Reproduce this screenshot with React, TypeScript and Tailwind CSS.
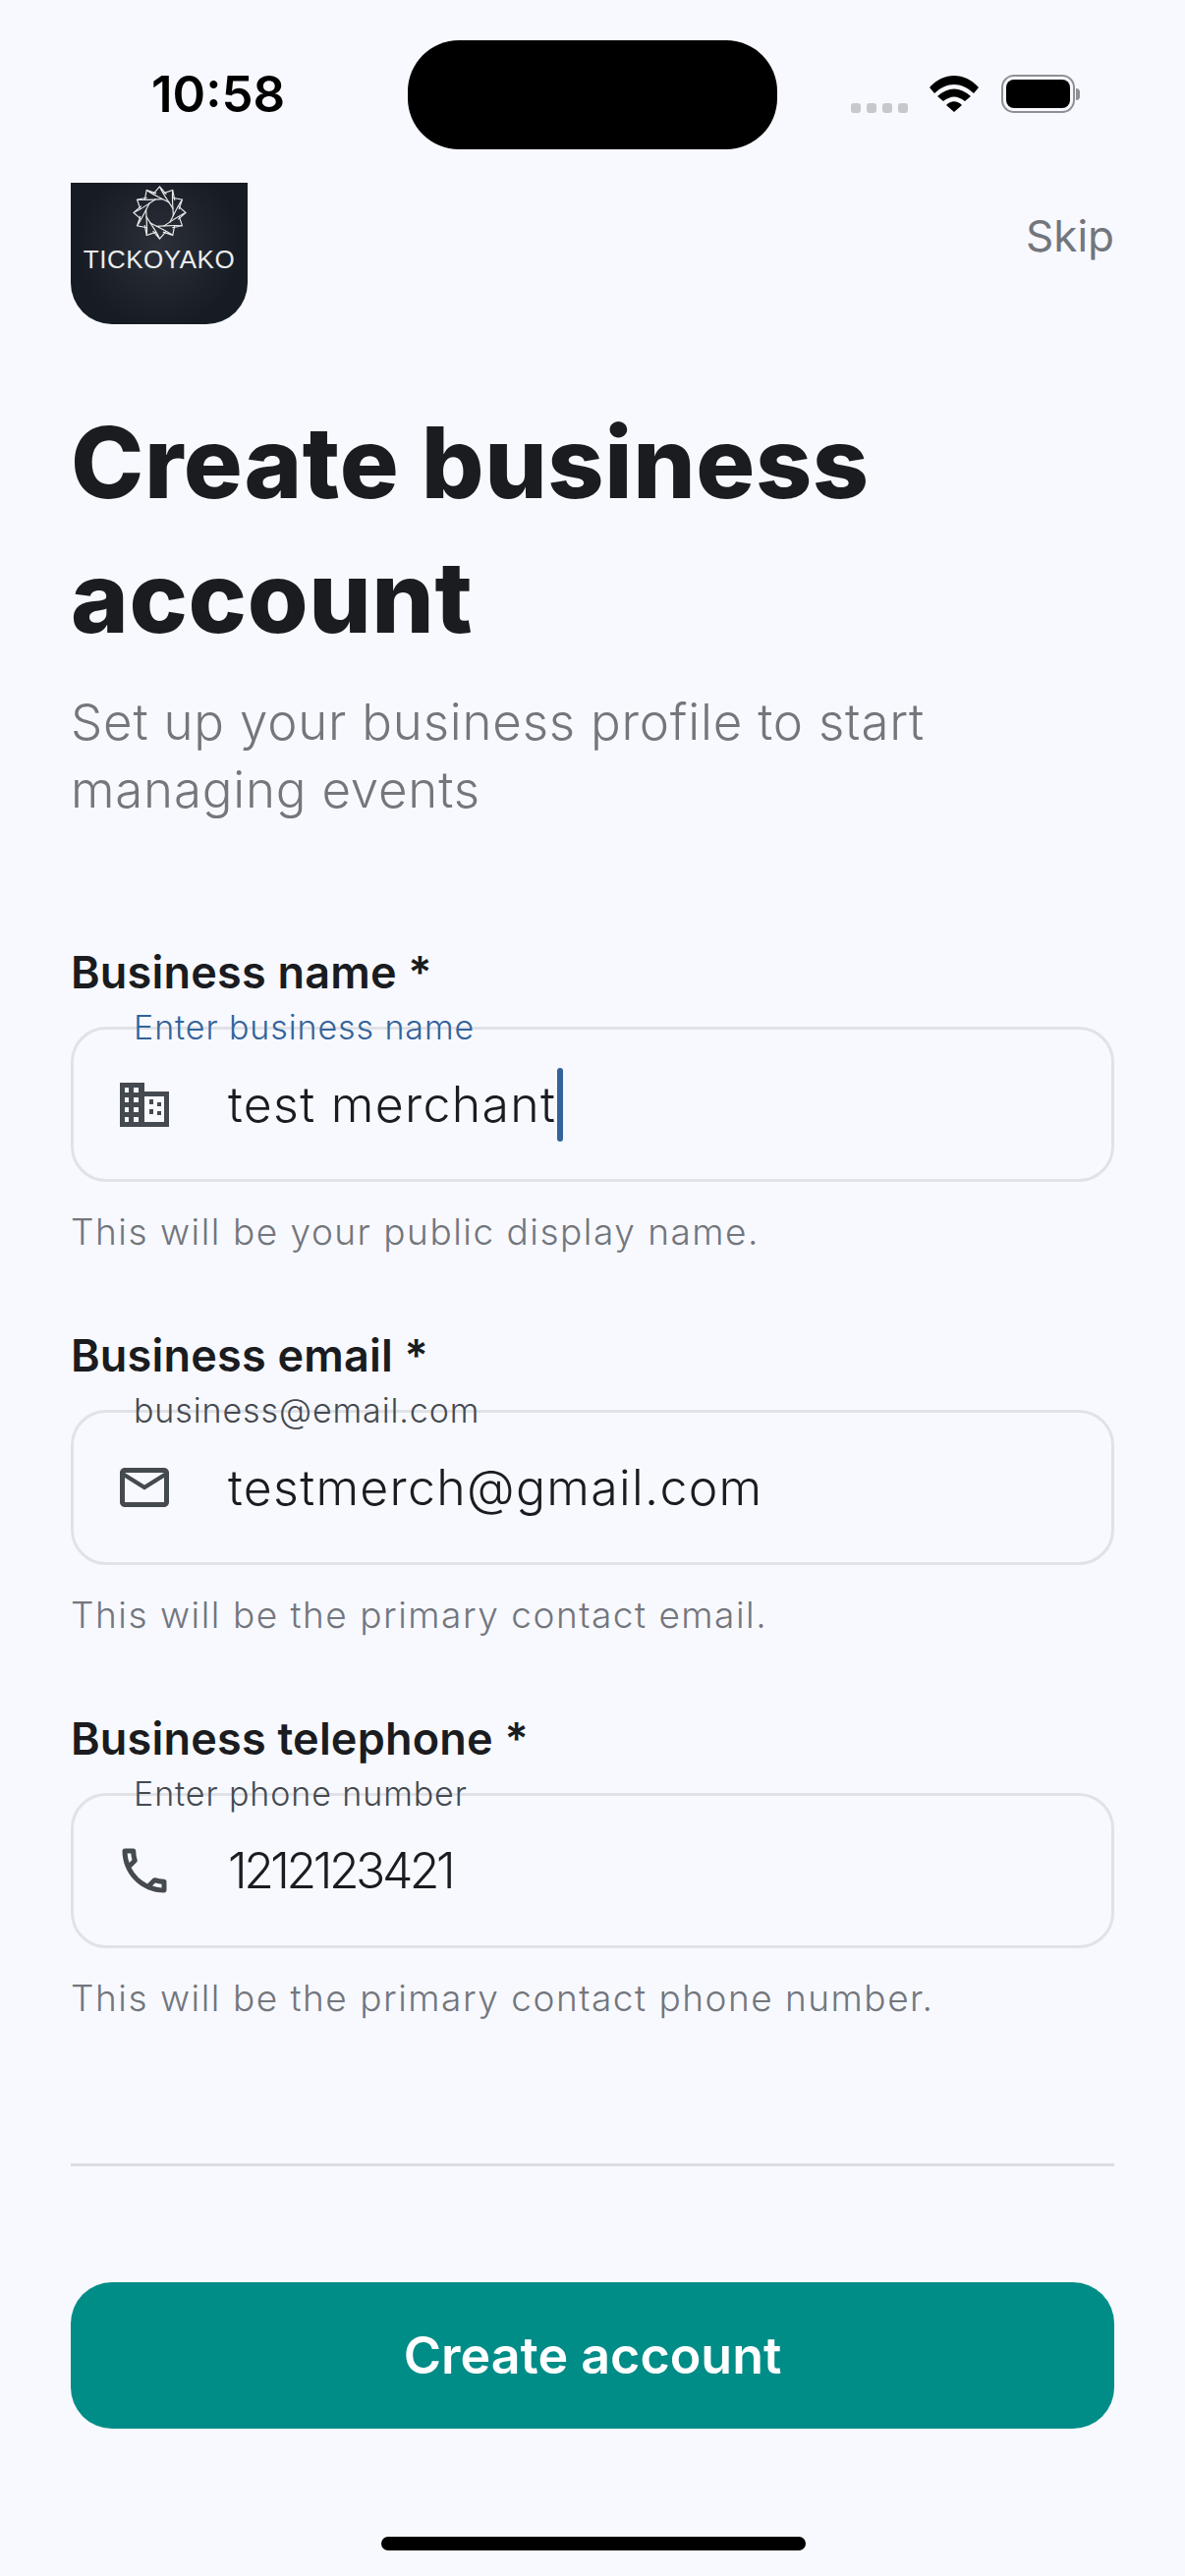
import React from "react";
import { MdOutlineEmail, MdOutlinePhone } from "react-icons/md";

const font = "[font-family:Inter,'Noto_Sans',sans-serif]";

function BuildingIcon() {
  return (
    <svg viewBox="0 0 50 45" className="w-[50px] h-[45px]" fill="#454a50" fillRule="evenodd">
      <path d="M0 0H25V9H50V45H0ZM5 5V10H9V5ZM14 5V10H19V5ZM5 15V20H9V15ZM14 15V20H19V15ZM5 25V30H9V25ZM14 25V30H19V25ZM5 35V40H9V35ZM14 35V40H19V35ZM25 14V40H45V14ZM30 17V22H34V17ZM38 20V24H42V20ZM30 27V32H34V27ZM38 29V33H42V29Z" />
    </svg>
  );
}

function Logo() {
  const petals = Array.from({ length: 12 }, (_, i) => i * 30);
  return (
    <div className="w-[180px] h-[144px] rounded-b-[42px] bg-[radial-gradient(circle_at_50%_45%,#2b3038,#171c24_70%)] overflow-hidden relative">
      <svg viewBox="-28 -28 56 56" className="absolute left-[63px] top-[3px] w-[55px] h-[55px]" fill="none" stroke="#e8e9ea" strokeWidth="1.2">
        {petals.map((a) => (
          <g key={a} transform={`rotate(${a})`}>
            <path d="M-7 -19 L0 -27 L7 -19 M0 -27 C3 -20 7 -15 14 -4" />
          </g>
        ))}
      </svg>
      <div className="absolute left-0 right-0 top-[66px] text-center text-[#eceded] text-[26px] leading-[24px] [font-family:'Liberation_Sans',sans-serif] tracking-[0.5px]">TICKOYAKO</div>
    </div>
  );
}

function Field({ label, placeholder, value, help, icon, focused, valueClass }: { label: string; placeholder: string; value: string; help: string; icon: React.ReactNode; focused?: boolean; valueClass: string }) {
  return (
    <div className="flex flex-col">
      <div className="text-[#1a1c20] text-[45px] leading-[60px] font-semibold tracking-[0.2px]">{label}</div>
      <div className="relative mt-[25px] h-[158px] rounded-[36px] border-[3px] border-[#e0e2e7] flex items-center pl-[47px]">
        <span className={`absolute left-[61px] top-[-24px] text-[34px] leading-[44px] tracking-[0.9px] font-light ${focused ? "text-[#33639a]" : "text-[#454a50]"}`}>{placeholder}</span>
        <span className="w-[50px] flex justify-center shrink-0">{icon}</span>
        <span className={`ml-[60px] text-[#1a1c20] text-[50px] leading-[70px] font-[350] flex items-center ${valueClass}`}>
          {value}
          {focused && <span className="inline-block w-[6px] h-[75px] rounded-full bg-[#33639a] ml-[1px]" />}
        </span>
      </div>
      <div className="mt-[26px] text-[#73767c] text-[37px] leading-[50px] font-light tracking-[1.5px]">{help}</div>
    </div>
  );
}

export default function App() {
  return (
    <div className={`w-[1206px] h-[2622px] bg-[#f8f9ff] relative overflow-hidden flex flex-col ${font}`}>
      <div className="absolute left-[415px] top-[41px] w-[376px] h-[111px] rounded-[52px] bg-black" />
      <div className="h-[186px] shrink-0 flex items-start justify-between pl-[154px] pr-[107px] pt-[66px]">
        <div className="text-black text-[51px] leading-[60px] font-semibold">10:58</div>
        <div className="flex items-center pt-[10px]">
          <div className="flex gap-[6px] mt-[28px]">
            {[0, 1, 2, 3].map((i) => (
              <span key={i} className="w-[10px] h-[10px] rounded-[3px] bg-[#c7c8cc]" />
            ))}
          </div>
          <svg viewBox="0 0 50 37" className="w-[50px] h-[37px] ml-[22px]">
            <path d="M0 12 C14 -4 36 -4 50 12 L45 18 C32 6 18 6 5 18Z M8 21 C19 11 31 11 42 21 L36 26 C28 20 22 20 14 26Z M17 30 C22 25 28 25 33 30 L25 37Z" fill="#000" />
          </svg>
          <div className="ml-[23px] w-[75px] h-[39px] rounded-[13px] border-[2.5px] border-[#8f9095] p-[3px]">
            <div className="w-full h-full rounded-[8px] bg-black" />
          </div>
          <div className="w-[4px] h-[12px] bg-[#8f9095] rounded-r-full ml-[1px]" />
        </div>
      </div>
      <div className="px-[72px] flex flex-col">
        <div className="flex justify-between items-start">
          <Logo />
          <div className="text-[#73767c] text-[44px] leading-[60px] mt-[24px] font-normal">Skip</div>
        </div>
        <h1 className="mt-[72px] text-[#1a1c20] text-[100px] leading-[137px] font-extrabold tracking-[0.6px]">Create business<br />account</h1>
        <p className="mt-[24px] text-[#73767c] text-[51px] leading-[69px] font-light tracking-[0.8px]">Set up your business profile to start<br />managing events</p>
        <div className="mt-[122px] flex flex-col gap-[71px]">
          <Field label="Business name *" placeholder="Enter business name" value="test merchant" valueClass="tracking-[1.3px]" help="This will be your public display name." icon={<BuildingIcon />} focused />
          <Field label="Business email *" placeholder="business@email.com" value="testmerch@gmail.com" valueClass="tracking-[1.3px]" help="This will be the primary contact email." icon={<MdOutlineEmail className="text-[#454a50] w-[60px] h-[60px] shrink-0" />} />
          <Field label="Business telephone *" placeholder="Enter phone number" value="1212123421" valueClass="tracking-[-3.5px]" help="This will be the primary contact phone number." icon={<MdOutlinePhone className="text-[#454a50] w-[60px] h-[60px] shrink-0" />} />
        </div>
        <div className="mt-[143px] h-[3px] bg-[#dcdde2]" />
        <button className="mt-[118px] h-[149px] rounded-[42px] bg-[#008c87] text-white text-[52px] font-semibold">Create account</button>
      </div>
      <div className="absolute left-[388px] top-[2582px] w-[432px] h-[14px] rounded-full bg-black" />
    </div>
  );
}
